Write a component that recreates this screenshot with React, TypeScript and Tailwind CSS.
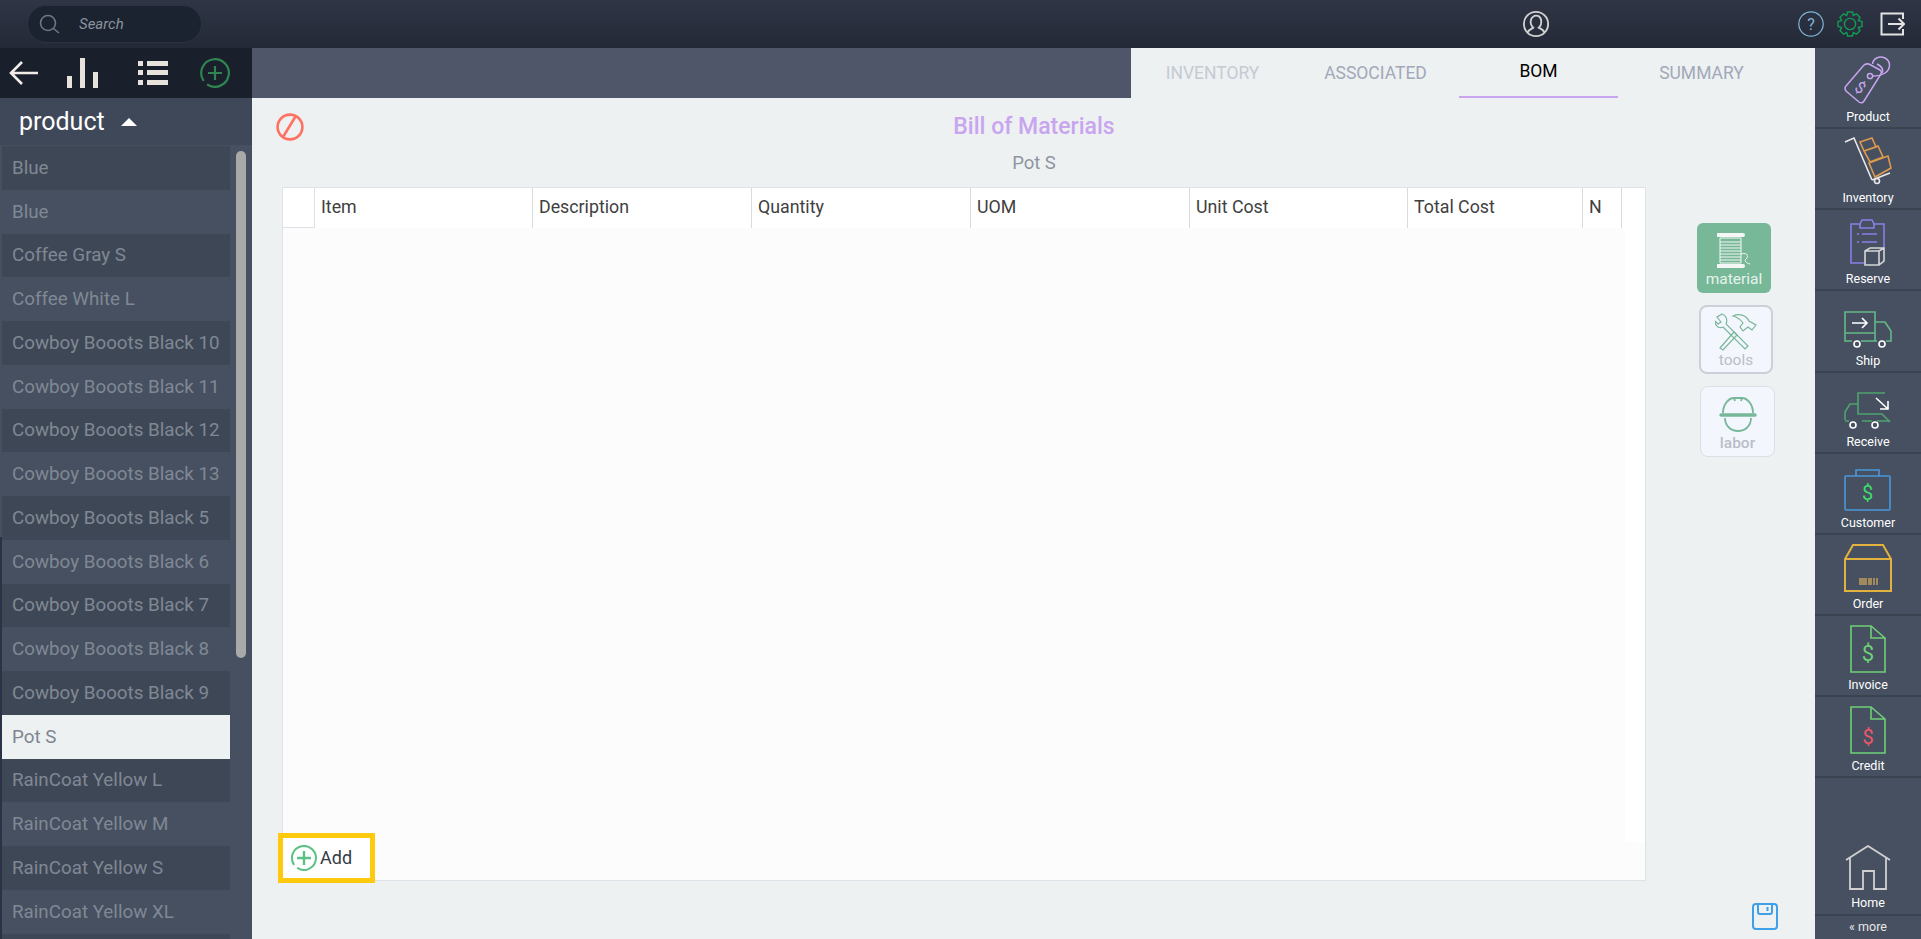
import { ReactNode } from "react";

const products = [
  "Blue",
  "Blue",
  "Coffee Gray S",
  "Coffee White L",
  "Cowboy Booots Black 10",
  "Cowboy Booots Black 11",
  "Cowboy Booots Black 12",
  "Cowboy Booots Black 13",
  "Cowboy Booots Black 5",
  "Cowboy Booots Black 6",
  "Cowboy Booots Black 7",
  "Cowboy Booots Black 8",
  "Cowboy Booots Black 9",
  "Pot S",
  "RainCoat Yellow L",
  "RainCoat Yellow M",
  "RainCoat Yellow S",
  "RainCoat Yellow XL",
  "",
];

const columns = [
  { label: "Item", width: "w-[218px]" },
  { label: "Description", width: "w-[219px]" },
  { label: "Quantity", width: "w-[219px]" },
  { label: "UOM", width: "w-[219px]" },
  { label: "Unit Cost", width: "w-[218px]" },
  { label: "Total Cost", width: "w-[175px]" },
  { label: "N", width: "w-[39px]" },
];

const navItems: { label: string; icon: ReactNode }[] = [
  {
    label: "Product",
    icon: (
      <svg width="48" height="49" viewBox="0 0 48 49" fill="none" strokeWidth="1.5" stroke="#c9a5ef">
        <path d="M2 30 L20 9 Q22 7.5 25 8 L36 14 Q38 15 37 18 L20 45 Q18 48 15 46 L2 35 Q0 32 2 30Z" />
        <circle cx="26" cy="20" r="2.6" />
        <path d="M28.5 20 C34 20 38 19 41 17 C47 13 47 5 41 2 C35 -1 29 3 28.5 8 M33 8 C37 10 40 13 38 17" />
        <text x="16" y="37" textAnchor="middle" fontSize="16" fill="#c9a5ef" stroke="none" transform="rotate(35 16 32)" fontFamily="Roboto, sans-serif">
          $
        </text>
      </svg>
    ),
  },
  {
    label: "Inventory",
    icon: (
      <svg width="48" height="50" viewBox="0 0 48 50" fill="none" strokeWidth="1.6">
        <path d="M1 6 L10 2 L28 44" stroke="#e8e8e8" />
        <circle cx="33" cy="45" r="2.5" stroke="#e8e8e8" />
        <path d="M28 44 L46 37" stroke="#e8e8e8" />
        <path d="M16 6 L28 2 L32 11 L20 15Z M20 15 L34 10 L39 21 L26 26Z M25 27 L44 20 L47 32 L31 41Z" stroke="#dd9a4d" />
      </svg>
    ),
  },
  {
    label: "Reserve",
    icon: (
      <svg width="36" height="48" viewBox="0 0 36 48" fill="none" strokeWidth="1.6">
        <path d="M14 44 H1 V5 H10 L12 1 H22 L24 5 H34 V30" stroke="#8a7de6" />
        <path d="M10 5 V9 H24 V5" stroke="#8a7de6" />
        <path d="M7 15 H9 M12 15 H27 M7 23 H9 M12 23 H27" stroke="#8a7de6" />
        <path d="M15 32 L20 29 H34 V42 L29 46 H15Z M15 32 H29 V46 M29 32 L34 29" stroke="#d5d5d5" />
      </svg>
    ),
  },
  {
    label: "Ship",
    icon: (
      <svg width="48" height="38" viewBox="0 0 48 38" fill="none" strokeWidth="1.6">
        <path d="M8 30 H1 V1 H31 V30 H17 M1 22 H31 M31 11 H41 L47 20 V30 H42 M31 30 H33" stroke="#65b987" />
        <circle cx="13" cy="33" r="3" stroke="#fff" />
        <circle cx="38" cy="33" r="3" stroke="#fff" />
        <path d="M8 12 H23 M18 7 L23 12 L18 17" stroke="#fff" />
      </svg>
    ),
  },
  {
    label: "Receive",
    icon: (
      <svg width="48" height="38" viewBox="0 0 48 38" fill="none" strokeWidth="1.6">
        <path d="M41 1 H14 V22 H38 L46 30 M14 12 H6 L1 20 V28 M18 29 H28 M38 29 H33" stroke="#4fa36e" />
        <path d="M1 29 H5 M38 29 H46" stroke="#4fa36e" />
        <circle cx="9" cy="33" r="3" stroke="#fff" />
        <circle cx="31" cy="33" r="3" stroke="#fff" />
        <path d="M32 6 L44 17 M44 9 V17 H36" stroke="#fff" />
      </svg>
    ),
  },
  {
    label: "Customer",
    icon: (
      <svg width="48" height="42" viewBox="0 0 48 42" fill="none" strokeWidth="1.6">
        <rect x="1" y="7" width="45" height="34" rx="1" stroke="#4a97dc" />
        <path d="M12 7 V1 H35 V7" stroke="#4a97dc" />
        <text x="23.5" y="31" textAnchor="middle" fontSize="20" fill="#3ddc6d" stroke="none" fontFamily="Roboto, sans-serif">
          $
        </text>
      </svg>
    ),
  },
  {
    label: "Order",
    icon: (
      <svg width="48" height="48" viewBox="0 0 48 48" fill="none" strokeWidth="2">
        <path d="M1 15 L9 1 H39 L47 15 V47 H1Z M1 15 H47" stroke="#e2b23f" />
        <path
          d="M16 34 V41 M18 34 V41 M20 34 V41 M22 34 V41 M25 34 V41 M27 34 V41 M30 34 V41 M33 34 V41"
          stroke="#c9a35a"
          strokeWidth="1.4"
        />
      </svg>
    ),
  },
  {
    label: "Invoice",
    icon: (
      <svg width="36" height="48" viewBox="0 0 36 48" fill="none" strokeWidth="1.6">
        <path d="M1 1 H21 L35 13 V47 H1Z M21 1 V13 H35" stroke="#6fcf76" />
        <text x="18" y="36" textAnchor="middle" fontSize="22" fill="#6fcf76" stroke="none" fontFamily="Roboto, sans-serif">
          $
        </text>
      </svg>
    ),
  },
  {
    label: "Credit",
    icon: (
      <svg width="36" height="48" viewBox="0 0 36 48" fill="none" strokeWidth="1.6">
        <path d="M1 1 H21 L35 13 V47 H1Z M21 1 V13 H35" stroke="#6fcf76" />
        <text x="18" y="38" textAnchor="middle" fontSize="20" fill="#f0566a" stroke="none" fontFamily="Roboto, sans-serif">
          $
        </text>
      </svg>
    ),
  },
];

function TopBar() {
  return (
    <div className="flex h-12 shrink-0 items-center bg-gradient-to-b from-[#2f3545] to-[#232936]">
      <div className="ml-[27px] flex h-[38px] w-[175px] items-center rounded-full border border-[#2b3344] bg-[#1b2230]">
        <svg className="ml-[10px]" width="22" height="22" viewBox="0 0 22 22" fill="none" stroke="#6d7888" strokeWidth="1.6">
          <circle cx="10" cy="10" r="7.5" />
          <path d="M15.5 15.5 L21 20" />
        </svg>
        <span className="ml-[19px] text-[15px] text-[#8c929c] italic">Search</span>
      </div>
      <svg className="ml-[1320px]" width="28" height="28" viewBox="0 0 30 30" fill="none" stroke="#d2d2d2" strokeWidth="2">
        <circle cx="15" cy="15" r="13" />
        <path d="M6 24 C7 21 11 20 12 19 C9 16 9 13 9.5 11 C10 8 13 6 15 6 C18 6 20 8 20.5 11 C21 14 20 17 18 19 C20 20 23 21 24 24" />
      </svg>
      <svg className="ml-[248px]" width="26" height="26" viewBox="0 0 26 26" fill="none">
        <circle cx="13" cy="13" r="12.2" stroke="#7fb6da" strokeWidth="1.2" />
        <text x="13" y="18.5" textAnchor="middle" fontSize="16" fill="#7fb6da" fontFamily="Roboto, sans-serif">
          ?
        </text>
      </svg>
      <svg className="ml-[13px]" width="26" height="26" viewBox="0 0 26 26" fill="none" stroke="#159a55" strokeWidth="1.4">
        <circle cx="13" cy="13" r="5.6" />
        <path d="M10.5 1 H15.5 L16.3 4.4 L19.4 2.8 L23 6.4 L21.4 9.6 L25 10.5 V15.5 L21.4 16.4 L23 19.6 L19.4 23.2 L16.3 21.6 L15.5 25 H10.5 L9.7 21.6 L6.6 23.2 L3 19.6 L4.6 16.4 L1 15.5 V10.5 L4.6 9.6 L3 6.4 L6.6 2.8 L9.7 4.4Z" />
      </svg>
      <svg className="ml-[17px]" width="25" height="24" viewBox="0 0 25 24" fill="none" stroke="#e3e3e3" strokeWidth="2">
        <path d="M23 7 V1.5 H1.5 V22.5 H23 V17" />
        <path d="M8 12 H24 M18.5 6.5 L24 12 L18.5 17.5" />
      </svg>
    </div>
  );
}

function Sidebar() {
  return (
    <aside className="relative flex w-[252px] shrink-0 flex-col overflow-hidden bg-[#465061]">
      <div className="flex h-[50px] shrink-0 items-center bg-[#1a202b]">
        <svg className="ml-[9px]" width="30" height="26" viewBox="0 0 30 26" fill="none" stroke="#f0ece8" strokeWidth="2.6">
          <path d="M29 13 H3 M13 2 L2 13 L13 24" />
        </svg>
        <svg className="ml-[28px]" width="32" height="30" viewBox="0 0 32 30" fill="#e8e2dc">
          <rect x="0" y="18" width="5" height="12" />
          <rect x="13" y="0" width="5" height="30" />
          <rect x="26" y="14" width="5" height="16" />
        </svg>
        <svg className="ml-[39px]" width="30" height="26" viewBox="0 0 30 26" fill="#e8e2dc">
          <rect x="0" y="1" width="5" height="5" />
          <rect x="9" y="1" width="21" height="5" />
          <rect x="0" y="10" width="5" height="5" />
          <rect x="9" y="10" width="21" height="5" />
          <rect x="0" y="20" width="5" height="5" />
          <rect x="9" y="20" width="21" height="5" />
        </svg>
        <svg className="ml-[32px]" width="30" height="30" viewBox="0 0 30 30" fill="none" stroke="#2f8552" strokeWidth="2.2">
          <path d="M7.08 26.3 A13.8 13.8 0 1 0 3.7 22.9" />
          <path d="M15 8 V22 M8 15 H22" />
        </svg>
      </div>
      <div className="flex h-[47px] shrink-0 items-center bg-[#3f4858] pl-[19px]">
        <span className="text-[25px] text-white">product</span>
        <span className="ml-4 h-0 w-0 border-x-[8px] border-b-[8px] border-x-transparent border-b-white" />
      </div>
      <div className="flex flex-col pt-[1px] pl-[2px]">
        {products.map((name, i) => {
          const selected = name === "Pot S";
          return (
            <div
              key={i}
              className={
                selected
                  ? "flex h-[43.75px] w-[228px] shrink-0 items-center bg-[#edf1f2] pl-[10px] text-[18.8px] text-[#7e8690]"
                  : i % 2 === 0
                    ? "flex h-[43.75px] w-[228px] shrink-0 items-center bg-[#3e4756] pl-[10px] text-[18.8px] text-[#808894]"
                    : "flex h-[43.75px] w-[228px] shrink-0 items-center pl-[10px] text-[18.8px] text-[#808894]"
              }
            >
              {name}
            </div>
          );
        })}
      </div>
      <div className="absolute top-[103px] left-[236px] h-[507px] w-[10px] rounded-full bg-[#a9a9a9]" />
      <div className="absolute top-[489px] bottom-0 left-0 w-[2px] bg-[#2a3346]" />
    </aside>
  );
}

function Tabs() {
  const tabs = ["INVENTORY", "ASSOCIATED", "BOM", "SUMMARY"];
  return (
    <div className="flex h-[50px] shrink-0">
      <div className="w-[879px] bg-[#50566a]" />
      <div className="flex flex-1 bg-[#edf1f2]">
        {tabs.map((tab) => (
          <div
            key={tab}
            className={
              tab === "BOM"
                ? "mx-[2px] flex h-[50px] w-[159px] items-center justify-center border-b-2 border-[#c9a5ef] pb-[2px] text-[17.5px] text-black"
                : tab === "INVENTORY"
                  ? "flex h-[50px] w-[163px] items-center justify-center text-[17.5px] text-[#c6cad3]"
                  : "flex h-[50px] w-[163px] items-center justify-center text-[17.5px] text-[#a2a8b8]"
            }
          >
            {tab}
          </div>
        ))}
      </div>
    </div>
  );
}

function BomTable() {
  return (
    <div className="relative ml-[30px] flex h-[694px] w-[1364px] shrink-0 flex-col border border-[#dde2e8] bg-[#fcfcfc]">
      <div className="flex h-10 shrink-0 bg-white">
        <div className="w-[32px] shrink-0 border-r border-b border-[#dde2e8]" />
        {columns.map((col) => (
          <div
            key={col.label}
            className={`flex items-center border-r border-[#d8dcdf] pl-[6px] pb-[1px] text-[17.8px] text-[#404040] ${col.width}`}
          >
            {col.label}
          </div>
        ))}
      </div>
      <div className="flex flex-1">
        <div className="flex-1" />
        <div className="h-[614px] w-[20px] bg-white" />
      </div>
      <div className="absolute top-[645px] left-[-5px] flex h-[50px] w-[97px] items-center border-[5px] border-[#ffc90d] bg-white">
        <svg className="ml-2" width="26" height="26" viewBox="0 0 26 26" fill="none" stroke="#5cc185" strokeWidth="2">
          <path d="M6.1 22.8 A12 12 0 1 0 3.17 19.9" />
          <path d="M13 6 V20 M6 13 H20" strokeWidth="2.4" />
        </svg>
        <span className="ml-[3px] pb-[1px] text-[18px] text-[#333a45]">Add</span>
      </div>
    </div>
  );
}

function ToolButtons() {
  return (
    <div className="ml-[51px] flex flex-col pt-[36px]">
      <div className="flex h-[70px] w-[74px] flex-col items-center rounded-md bg-[#76b898] pt-[10px]">
        <svg width="34" height="36" viewBox="0 0 34 36" fill="none" stroke="#f4f7f5">
          <path d="M1 2 H26 M1 33 H26" strokeWidth="4" strokeLinecap="round" />
          <path d="M3 5 H24 V30 H3Z M3 9 H24 M3 12 H24 M3 15 H24 M3 18 H24 M3 21 H24 M3 24 H24 M3 27 H24" strokeWidth="1" />
          <path d="M24 21 C31 19 32 24 29 26 C27 28 29 30 33 31" strokeWidth="1" />
        </svg>
        <span className="text-[15.5px] leading-[20px] text-[#e8f3ec]">material</span>
      </div>
      <div className="mt-[12px] ml-[2px] flex h-[69px] w-[74px] flex-col items-center rounded-lg border-2 border-[#ccd0d8] bg-[#f4f6fd] pt-[6px]">
        <svg width="42" height="38" viewBox="0 0 42 38" fill="none" stroke="#76b898" strokeWidth="1.2">
          <path d="M7 1 L2 4 L6 9 L3 11 L0 8 C0 13 4 16 8 14 L30 36 L33 33 L11 11 C13 7 11 2 7 1Z" />
          <path d="M12 27 L19 19 L22 22 L8 37 L5 35Z" />
          <path d="M18 3 C24 0 31 2 34 8 L41 12 L37 17 L33 14 L28 18 L25 14 L28 10 C25 6 22 4 18 3Z" />
        </svg>
        <span className="text-[15.5px] leading-[19px] text-[#b9bdc8]">tools</span>
      </div>
      <div className="mt-[12px] ml-[3px] flex h-[71px] w-[75px] flex-col items-center rounded-lg border border-[#dbdfe6] bg-[#f4f6fd] pt-[10px]">
        <svg width="38" height="36" viewBox="0 0 38 36" fill="none" stroke="#76b898" strokeWidth="1.8">
          <path d="M4 16 C4 7 10 1 15 1 L16 4 M15 1 H23 L22 4 M23 1 C28 1 34 7 34 16" />
          <path d="M2 18 H36" strokeWidth="3.4" strokeLinecap="round" />
          <path d="M6 21 C6 29 12 34 19 34 C26 34 32 29 32 21" />
        </svg>
        <span className="mt-[1px] text-[15.5px] leading-[19px] font-medium text-[#b9bdc8]">labor</span>
      </div>
    </div>
  );
}

function Workspace() {
  return (
    <main className="flex min-w-0 flex-1 flex-col">
      <Tabs />
      <div className="relative flex flex-1 flex-col bg-[#edf1f2]">
        <svg className="absolute top-[15px] left-[24px]" width="28" height="28" viewBox="0 0 28 28" fill="none" stroke="#ff7263" strokeWidth="2.6">
          <circle cx="14" cy="14" r="12.4" />
          <path d="M19.5 3.5 L7 24" />
        </svg>
        <div className="flex h-[89px] shrink-0 flex-col items-center pt-[15px] pl-[1px]">
          <div className="text-[23px] leading-[27px] font-medium text-[#c9a5ef]">Bill of Materials</div>
          <div className="mt-[13px] text-[18.5px] leading-[20px] text-[#8f959e]">Pot S</div>
        </div>
        <div className="flex">
          <BomTable />
          <ToolButtons />
        </div>
        <div className="mt-[22px] flex justify-end pr-[37px]">
          <svg width="26" height="27" viewBox="0 0 26 27" fill="none" stroke="#3fa0e8" strokeWidth="2">
            <rect x="1" y="1" width="24" height="25" rx="3" />
            <path d="M6 1 V9 Q6 11 8 11 H18 Q20 11 20 9 V1" />
            <path d="M15.5 4 V8" />
          </svg>
        </div>
      </div>
    </main>
  );
}

function NavItem({ label, icon }: { label: string; icon: ReactNode }) {
  return (
    <div className="flex h-[81.15px] shrink-0 flex-col items-center justify-end border-b-2 border-[#3a4350] pb-[2px]">
      <div className="flex flex-1 items-end justify-center pb-[4px]">{icon}</div>
      <span className="text-[12.5px] leading-[16px] text-white">{label}</span>
    </div>
  );
}

function RightNav() {
  return (
    <nav className="flex w-[106px] shrink-0 flex-col bg-[#465061]">
      {navItems.map((item) => (
        <NavItem key={item.label} {...item} />
      ))}
      <div className="flex-1" />
      <div className="flex flex-col items-center border-b-2 border-[#3a4350] pb-[3px]">
        <svg width="46" height="46" viewBox="0 0 46 46" fill="none" stroke="#d0d0d0" strokeWidth="1.8">
          <path d="M1 15 L23 1 L45 15 M5 13 V44 H18 V26 H29 V44 H41 V13" />
        </svg>
        <span className="mt-[4px] text-[12.5px] leading-[16px] text-white">Home</span>
      </div>
      <div className="flex h-[23px] shrink-0 items-center justify-center text-[12.5px] text-[#e8e8e8]">« more</div>
    </nav>
  );
}

export default function App() {
  return (
    <div className="flex h-[939px] w-[1921px] flex-col overflow-hidden bg-[#edf1f2] font-['Roboto',sans-serif]">
      <TopBar />
      <div className="flex min-h-0 flex-1">
        <Sidebar />
        <Workspace />
        <RightNav />
      </div>
    </div>
  );
}
